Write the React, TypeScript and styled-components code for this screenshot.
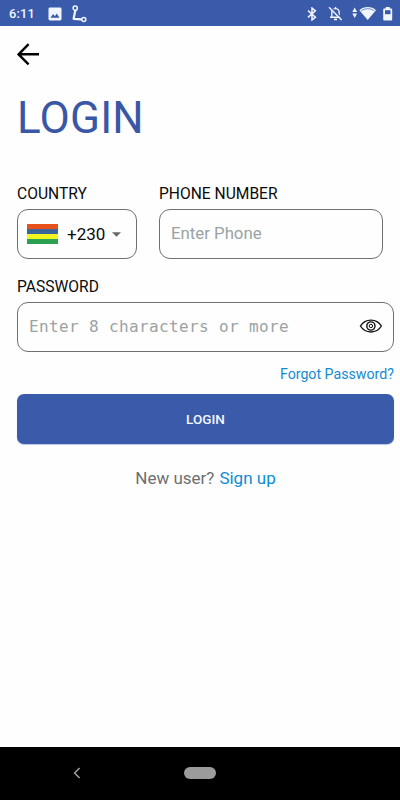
import React from "react";
import styled, { createGlobalStyle } from "styled-components";

const GlobalStyle = createGlobalStyle`
  * { box-sizing: border-box; }
  body { margin: 0; background: #fff; }
`;

const Screen = styled.div`
  width: 400px;
  height: 800px;
  display: flex;
  flex-direction: column;
  overflow: hidden;
  background: #fefefe;
  color: #0a0a0a;
  font-family: Roboto, "Liberation Sans", sans-serif;
`;

const StatusBar = styled.header`
  height: 26px;
  flex: none;
  display: flex;
  align-items: center;
  padding: 1px 7px 0 9px;
  background: #3a5aaa;
  color: #f1f5ff;
`;

const Clock = styled.span`
  width: 39px;
  font-size: 12.8px;
  line-height: 16px;
  font-weight: 500;
  letter-spacing: 0.2px;
`;

const StatusIcon = styled.svg<{ $gap?: number }>`
  flex: none;
  display: block;
  margin-left: ${(p) => p.$gap ?? 0}px;
`;

const Spacer = styled.div`
  flex: 1;
`;

const Content = styled.main`
  flex: 1;
  display: flex;
  flex-direction: column;
  padding: 16px 6px 0 17px;
`;

const BackButton = styled.button`
  width: 24px;
  height: 24px;
  padding: 0;
  border: 0;
  background: none;
`;

const Title = styled.h1`
  margin: 26px 0 0;
  height: 52px;
  font-size: 44px;
  line-height: 52px;
  font-weight: 400;
  letter-spacing: 0.2px;
  color: #3957a5;
`;

const FieldRow = styled.div`
  display: flex;
  gap: 22px;
  margin-top: 40px;
`;

const Field = styled.div<{ $width?: number; $top?: number }>`
  width: ${(p) => (p.$width ? `${p.$width}px` : "100%")};
  margin-top: ${(p) => p.$top ?? 0}px;
`;

const Label = styled.label`
  display: block;
  height: 25px;
  font-size: 15.6px;
  line-height: 20px;
  white-space: nowrap;
`;

const Box = styled.div<{ $left?: number }>`
  height: 50px;
  display: flex;
  align-items: center;
  padding: 0 11px 0 ${(p) => p.$left ?? 11}px;
  border: 1px solid #707070;
  border-radius: 11px;
`;

const Flag = styled.div`
  width: 31px;
  height: 20px;
  display: grid;
  grid-template-rows: repeat(4, 1fr);
`;

const Stripe = styled.div<{ $color: string }>`
  background: ${(p) => p.$color};
`;

const Code = styled.span`
  margin: 0 7px 1px 9px;
  font-size: 17px;
  line-height: 24px;
`;

const Input = styled.input<{ $mono?: boolean }>`
  flex: 1;
  min-width: 0;
  height: 46px;
  padding: 0;
  border: 0;
  outline: 0;
  background: transparent;
  font-family: ${(p) => (p.$mono ? '"DejaVu Sans Mono", monospace' : "Roboto, sans-serif")};
  font-size: ${(p) => (p.$mono ? 16 : 16.8)}px;
  letter-spacing: ${(p) => (p.$mono ? 0.37 : 0)}px;
  margin-bottom: 2px;
  &::placeholder {
    color: #99a3a3;
    opacity: 1;
  }
`;

const EyeButton = styled.button`
  margin: 0 0 3px;
  padding: 0;
  border: 0;
  background: none;
`;

const Forgot = styled.a`
  align-self: flex-end;
  margin-top: 12px;
  margin-bottom: 1px;
  font-size: 14.2px;
  line-height: 20px;
  color: #148bd3;
`;

const LoginButton = styled.button`
  height: 50px;
  flex: none;
  margin-top: 9px;
  padding: 0;
  border: 0;
  border-radius: 7px;
  background: #3a5aaa;
  box-shadow: 0 1px 1px #b9c5df;
  color: #f4f7ff;
  font-family: Roboto, sans-serif;
  font-size: 13.5px;
  font-weight: 500;
`;

const SignUpLine = styled.p`
  display: flex;
  justify-content: center;
  gap: 5px;
  margin: 22px 0 0;
  font-size: 17px;
  line-height: 24px;
  color: #6e6e6e;
`;

const SignUp = styled.a`
  color: #0b8cd8;
`;

const NavBar = styled.nav`
  height: 53px;
  flex: none;
  display: grid;
  grid-template-columns: 153px 94px 153px;
  place-items: center;
  padding-bottom: 1px;
  background: #000;
`;

const HomePill = styled.div`
  width: 32px;
  height: 12px;
  border-radius: 6px;
  background: #9b9b9b;
`;

const stripes = ["#e8501c", "#3a669b", "#f3f51e", "#2ba052"];

export default function App() {
  return (
    <Screen>
      <GlobalStyle />
      <StatusBar>
        <Clock>6:11</Clock>
        <StatusIcon width="14" height="14" viewBox="0 0 14 14">
          <rect x="0.5" y="0.5" width="13" height="13" rx="1.4" fill="currentColor" />
          <path d="M2.5 10.7l2.6-3.6 1.8 2.2 1.8-2.8 2.8 4.2z" fill="#3a5aaa" />
        </StatusIcon>
        <StatusIcon $gap={9} width="17" height="18" viewBox="0 0 17 18" fill="none" stroke="currentColor">
          <circle cx="4.2" cy="3.2" r="2.1" strokeWidth="1.5" />
          <path d="M4.4 5L2.6 13.8L10.5 14.4" strokeWidth="2.2" strokeLinejoin="round" />
          <circle cx="12.8" cy="14.4" r="2" strokeWidth="1.5" />
        </StatusIcon>
        <Spacer />
        <StatusIcon width="10" height="14" viewBox="0 0 10 14" fill="none" stroke="currentColor" strokeWidth="1.5">
          <path d="M1 3.6L8.4 10.2L5 13V1l3.4 2.8L1 10.4" />
        </StatusIcon>
        <StatusIcon $gap={11} width="15" height="15" viewBox="0 0 15 15" fill="none" stroke="currentColor" strokeWidth="1.4">
          <path d="M3.8 11V6.4c0-2 1.5-3.8 3.7-3.8s3.7 1.8 3.7 3.8V11M2 11.3h11M7.5 1v1.5" />
          <path d="M6 13.4h3" strokeWidth="1.7" />
          <path d="M3 1.3L14.6 13" stroke="#3a5aaa" strokeWidth="1.4" />
          <path d="M1 1.3L13.6 14" />
        </StatusIcon>
        <StatusIcon $gap={9} width="24" height="15" viewBox="0 0 24 15" fill="currentColor">
          <path d="M0.3 6L2.7 1.5L5.1 6zM0.3 7.5h4.8L2.7 12z" />
          <path d="M7.4 4.2C11.8 0 19.8 0 24 4.2L15.7 14z" />
          <path d="M9.1 4.9c3.7-2.9 9.6-2.9 13.2 0" fill="none" stroke="#3a5aaa" strokeWidth="0.7" />
        </StatusIcon>
        <StatusIcon $gap={7} width="10" height="14" viewBox="0 0 10 14">
          <path d="M2.7 0h4v1.4h1.5q1 0 1 1v10.2q0 1-1 1h-7q-1 0-1-1V2.4q0-1 1-1h1.5z" fill="currentColor" />
          <path d="M2 3.2h5.5v4H2z" fill="#3a5aaa" />
        </StatusIcon>
      </StatusBar>
      <Content>
        <BackButton aria-label="Back">
          <StatusIcon width="24" height="24" viewBox="0 0 24 24" fill="none" stroke="#000" strokeWidth="2.4">
            <path d="M22 12.3H2M11.6 2.2L1.6 12.3l10 10" />
          </StatusIcon>
        </BackButton>
        <Title>LOGIN</Title>
        <FieldRow>
          <Field $width={120}>
            <Label>COUNTRY</Label>
            <Box $left={9}>
              <Flag>
                {stripes.map((c) => (
                  <Stripe key={c} $color={c} />
                ))}
              </Flag>
              <Code>+230</Code>
              <StatusIcon width="9" height="5" viewBox="0 0 9 5">
                <path d="M0 0.3h9L4.5 4.8z" fill="#686868" />
              </StatusIcon>
            </Box>
          </Field>
          <Field $width={224}>
            <Label htmlFor="phone">PHONE NUMBER</Label>
            <Box>
              <Input id="phone" placeholder="Enter Phone" />
            </Box>
          </Field>
        </FieldRow>
        <Field $top={18}>
          <Label htmlFor="password">PASSWORD</Label>
          <Box>
            <Input id="password" $mono placeholder="Enter 8 characters or more" />
            <EyeButton aria-label="Show password">
              <StatusIcon width="23" height="14" viewBox="0 0 23 14" fill="none" stroke="#111" strokeWidth="1.4">
                <path d="M1.4 7C6.4-.9 17.6-.9 22.4 7C17.6 14.9 6.4 14.9 1.4 7z" />
                <circle cx="11.9" cy="7" r="4.1" />
                <circle cx="11.9" cy="7" r="1.7" strokeWidth="1" />
              </StatusIcon>
            </EyeButton>
          </Box>
        </Field>
        <Forgot>Forgot Password?</Forgot>
        <LoginButton>LOGIN</LoginButton>
        <SignUpLine>
          <span>New user?</span>
          <SignUp>Sign up</SignUp>
        </SignUpLine>
      </Content>
      <NavBar>
        <StatusIcon width="8" height="12" viewBox="0 0 8 12" fill="none" stroke="#a0a0a0" strokeWidth="1.5">
          <path d="M6.6 1L1.6 6l5 5" />
        </StatusIcon>
        <HomePill />
      </NavBar>
    </Screen>
  );
}
